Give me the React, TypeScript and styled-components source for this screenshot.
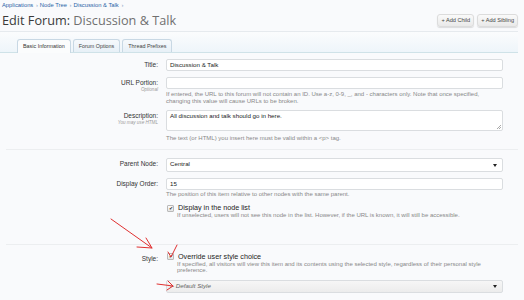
import React from "react";
import styled, { createGlobalStyle } from "styled-components";

const GlobalStyle = createGlobalStyle`
  html, body {
    margin: 0;
    padding: 0;
    background: #f9fafc;
  }
  body {
    font-family: "Liberation Sans", Arial, sans-serif;
    color: #333;
  }
`;

const Page = styled.div`
  position: relative;
  width: 524px;
  height: 300px;
  overflow: hidden;
`;

const Breadcrumb = styled.div`
  display: flex;
  gap: 2px;
  padding: 2px 0 0 2px;
  font-size: 5.8px;
  line-height: 7px;
  color: #2b63a6;
`;

const Crumb = styled.span`
  &::after {
    content: " ›";
    color: #8aa3c2;
    margin-left: 1px;
  }
`;

const TitleRow = styled.div`
  display: flex;
  align-items: center;
  justify-content: space-between;
  padding: 3px 6px 0 2px;
  height: 16px;
`;

const Heading = styled.h1`
  margin: 0;
  font-family: "Open Sans", "Liberation Sans", sans-serif;
  font-size: 12.7px;
  font-weight: normal;
  line-height: 16px;
  color: #3a3a3a;
`;

const HeadingTitle = styled.span`
  color: #707070;
`;

const Actions = styled.div`
  display: flex;
  gap: 3px;
`;

const ActionButton = styled.div`
  height: 11px;
  padding: 0 3px;
  border: 1px solid #dcdcdc;
  border-radius: 3px;
  background: linear-gradient(#fafafa, #e9e9e9);
  box-shadow: 0 1px 1px rgba(0, 0, 0, 0.12);
  font-size: 5.6px;
  line-height: 11px;
  color: #444;
`;

const TabBar = styled.div`
  margin: 3px 6px 0 0;
  height: 20px;
  border-top: 1px solid #e6eaee;
  border-bottom: 1px solid #cfe2e8;
  background: linear-gradient(#fbfcfd, #eef5fa);
  display: flex;
  align-items: flex-end;
  padding-left: 17px;
  gap: 2px;
`;

const Tab = styled.div<{ $active?: boolean }>`
  padding: 0 5px;
  border: 1px solid #c8d8e4;
  border-bottom: none;
  border-radius: 3px 3px 0 0;
  background: ${(p) => (p.$active ? "#fbfcfd" : "linear-gradient(#f6f9fc, #e7f0f7)")};
  font-size: 5.4px;
  line-height: 12px;
  color: ${(p) => (p.$active ? "#333" : "#444")};
  margin-bottom: ${(p) => (p.$active ? "-1px" : "0")};
  height: ${(p) => (p.$active ? "13px" : "12px")};
`;

const Form = styled.div`
  display: flex;
  flex-direction: column;
  padding: 6px 0 0 0;
`;

const Row = styled.div<{ $mt?: number }>`
  display: grid;
  grid-template-columns: 158px 337px;
  column-gap: 8px;
  margin-top: ${(p) => p.$mt ?? 0}px;
`;

const Label = styled.div`
  text-align: right;
  font-size: 6.5px;
  line-height: 8px;
  color: #333;
  padding-top: 2px;
`;

const Hint = styled.div`
  font-size: 4.6px;
  line-height: 6px;
  font-style: italic;
  color: #999;
`;

const Field = styled.div`
  display: flex;
  flex-direction: column;
`;

const Input = styled.div<{ $h?: number }>`
  box-sizing: border-box;
  height: ${(p) => p.$h ?? 12}px;
  border: 1px solid #dadde0;
  border-radius: 2px;
  background: #fff;
  padding: 0 3px;
  font-size: 6.2px;
  line-height: ${(p) => Math.min(p.$h ?? 12, 11) - 1}px;
  color: #222;
  position: relative;
`;

const Select = styled(Input)<{ $grey?: boolean }>`
  background: ${(p) => (p.$grey ? "linear-gradient(#f6f6f6, #ececec)" : "#fff")};
  color: ${(p) => (p.$grey ? "#666" : "#222")};
  font-style: ${(p) => (p.$grey ? "italic" : "normal")};
  &::after {
    content: "";
    position: absolute;
    right: 5px;
    top: 50%;
    margin-top: -1px;
    border-left: 2px solid transparent;
    border-right: 2px solid transparent;
    border-top: 3px solid #222;
  }
`;

const Grip = styled.span`
  position: absolute;
  right: 1px;
  bottom: 1px;
  width: 4px;
  height: 4px;
  background: linear-gradient(135deg, transparent 45%, #aaa 45%, #aaa 55%, transparent 55%, transparent 70%, #aaa 70%, #aaa 80%, transparent 80%);
`;

const Help = styled.div<{ $mt?: number; $indent?: boolean }>`
  font-size: 6px;
  line-height: 6.5px;
  color: #888;
  margin-top: ${(p) => p.$mt ?? 2}px;
  padding-left: ${(p) => (p.$indent ? 11 : 0)}px;
`;

const Divider = styled.div<{ $mt: number }>`
  margin: ${(p) => p.$mt}px 6px 0 6px;
  height: 1px;
  background: #eceef0;
`;

const CheckRow = styled.div`
  display: flex;
  align-items: center;
  gap: 4px;
  font-size: 7.2px;
  line-height: 8px;
  color: #222;
  padding-left: 1px;
`;

const Box = styled.span`
  box-sizing: border-box;
  width: 7px;
  height: 7px;
  border: 1px solid #b9b9b9;
  border-radius: 1px;
  background: linear-gradient(#fdfdfd, #e4e4e4);
  display: flex;
  align-items: center;
  justify-content: center;
  font-size: 5px;
  line-height: 5px;
  color: #333;
`;

const Annotations = styled.svg`
  position: absolute;
  left: 0;
  top: 0;
  pointer-events: none;
`;

export default function App() {
  return (
    <Page>
      <GlobalStyle />
      <Breadcrumb>
        <Crumb>Applications</Crumb>
        <Crumb>Node Tree</Crumb>
        <Crumb>Discussion &amp; Talk</Crumb>
      </Breadcrumb>
      <TitleRow>
        <Heading>
          Edit Forum: <HeadingTitle>Discussion &amp; Talk</HeadingTitle>
        </Heading>
        <Actions>
          <ActionButton>+ Add Child</ActionButton>
          <ActionButton>+ Add Sibling</ActionButton>
        </Actions>
      </TitleRow>
      <TabBar>
        <Tab $active>Basic Information</Tab>
        <Tab>Forum Options</Tab>
        <Tab>Thread Prefixes</Tab>
      </TabBar>
      <Form>
        <Row>
          <Label>Title:</Label>
          <Input>Discussion &amp; Talk</Input>
        </Row>
        <Row $mt={6}>
          <Label>
            URL Portion:
            <Hint>Optional</Hint>
          </Label>
          <Field>
            <Input />
            <Help>
              If entered, the URL to this forum will not contain an ID. Use a-z, 0-9, _, and - characters only. Note that once specified,
              <br />
              changing this value will cause URLs to be broken.
            </Help>
          </Field>
        </Row>
        <Row $mt={6}>
          <Label>
            Description:
            <Hint>You may use HTML</Hint>
          </Label>
          <Field>
            <Input $h={21}>
              All discussion and talk should go in here.
              <Grip />
            </Input>
            <Help $mt={4}>The text (or HTML) you insert here must be valid within a &lt;p&gt; tag.</Help>
          </Field>
        </Row>
        <Divider $mt={7} />
        <Row $mt={8}>
          <Label>Parent Node:</Label>
          <Select $h={14}>Central</Select>
        </Row>
        <Row $mt={6}>
          <Label>Display Order:</Label>
          <Field>
            <Input>15</Input>
            <Help $mt={1}>The position of this item relative to other nodes with the same parent.</Help>
          </Field>
        </Row>
        <Row $mt={7}>
          <span />
          <Field>
            <CheckRow>
              <Box>✔</Box>
              Display in the node list
            </CheckRow>
            <Help $mt={0} $indent>
              If unselected, users will not see this node in the list. However, if the URL is known, it will still be accessible.
            </Help>
          </Field>
        </Row>
        <Divider $mt={25} />
        <Row $mt={8}>
          <Label>Style:</Label>
          <Field>
            <CheckRow>
              <Box>✔</Box>
              Override user style choice
            </CheckRow>
            <Help $mt={0} $indent>
              If specified, all visitors will view this item and its contents using the selected style, regardless of their personal style
              <br />
              preference.
            </Help>
            <Select $h={13} $grey style={{ marginTop: 6 }}>
              -- Default Style
            </Select>
          </Field>
        </Row>
      </Form>
      <Annotations width={524} height={300} viewBox="0 0 524 300">
        <g stroke="#e03030" strokeWidth={1} fill="none" strokeLinecap="round">
          <path d="M111 219 L152 248 M137 247 L152 248 L146 238" />
          <path d="M168 252 L171 257 L177 245" />
          <path d="M157 284 L173 286 M168 281 L173 286 L167 290" />
        </g>
      </Annotations>
    </Page>
  );
}
